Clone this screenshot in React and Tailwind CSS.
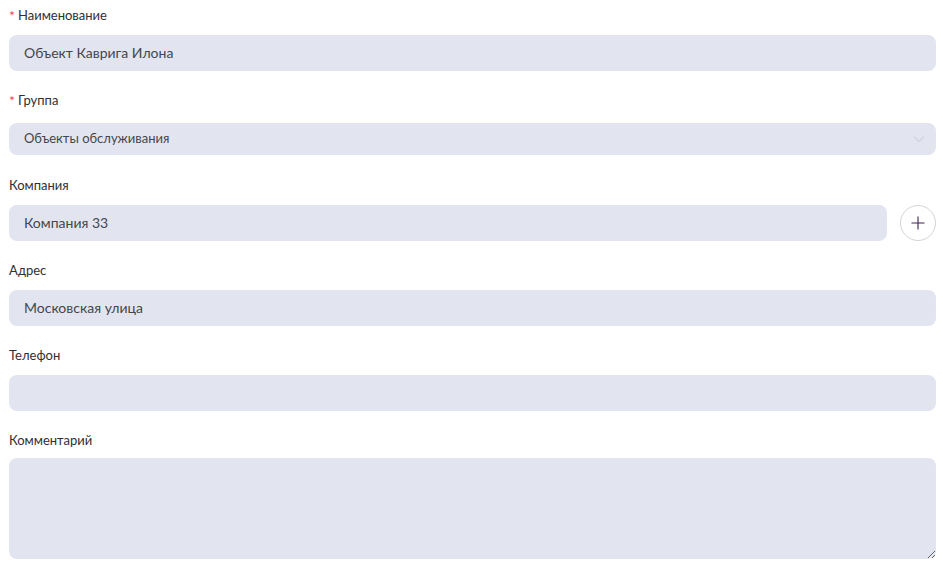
import React from "react";

const font = { fontFamily: 'Lato, "Noto Sans", sans-serif' };

function Label({ children, required }) {
  return (
    <div className="h-5 flex items-center text-[13px] text-[#2f2f35] leading-5">
      {required && <span className="text-[#f0445a] text-[14px] mr-[3px] relative top-[1px]">*</span>}
      {children}
    </div>
  );
}

function Field({ value }) {
  return (
    <div className="h-9 rounded-lg bg-[#e2e5ef] flex items-center pl-[15px] pb-[2px] text-[14px] text-[#45454d] w-full">
      {value}
    </div>
  );
}

export default function App() {
  return (
    <div className="bg-white w-[943px] h-[578px] pl-[9px] pr-[7px] pt-[5px]" style={font}>
      <Label required>Наименование</Label>
      <div className="mt-[10px]"><Field value="Объект Каврига Илона" /></div>

      <div className="mt-[19px]"><Label required>Группа</Label></div>
      <div className="mt-[13px] h-8 rounded-lg bg-[#e2e5ef] flex items-center justify-between pl-[15px] pr-[11px] pb-[1px] text-[13px] text-[#45454d]">
        <span>Объекты обслуживания</span>
        <svg width="12" height="8" viewBox="0 0 12 8" fill="none">
          <path d="M1 1.5 L6 6.5 L11 1.5" stroke="#c3c6d0" strokeWidth="1" />
        </svg>
      </div>

      <div className="mt-[20px]"><Label>Компания</Label></div>
      <div className="mt-[10px] flex items-center gap-[13px]">
        <Field value="Компания 33" />
        <div className="shrink-0 w-9 h-9 rounded-full border border-[#d4d4d8] bg-white flex items-center justify-center">
          <svg width="14" height="14" viewBox="0 0 14 14" fill="none">
            <path d="M7 0.5 V13.5 M0.5 7 H13.5" stroke="#3c2250" strokeWidth="1.1" />
          </svg>
        </div>
      </div>

      <div className="mt-[19px]"><Label>Адрес</Label></div>
      <div className="mt-[10px]"><Field value="Московская улица" /></div>

      <div className="mt-[19px]"><Label>Телефон</Label></div>
      <div className="mt-[10px]"><Field value="" /></div>

      <div className="mt-[19px]"><Label>Комментарий</Label></div>
      <textarea
        className="mt-[8px] block w-full h-[101px] rounded-lg bg-[#e2e5ef] resize-y outline-none"
        style={font}
      />
    </div>
  );
}
